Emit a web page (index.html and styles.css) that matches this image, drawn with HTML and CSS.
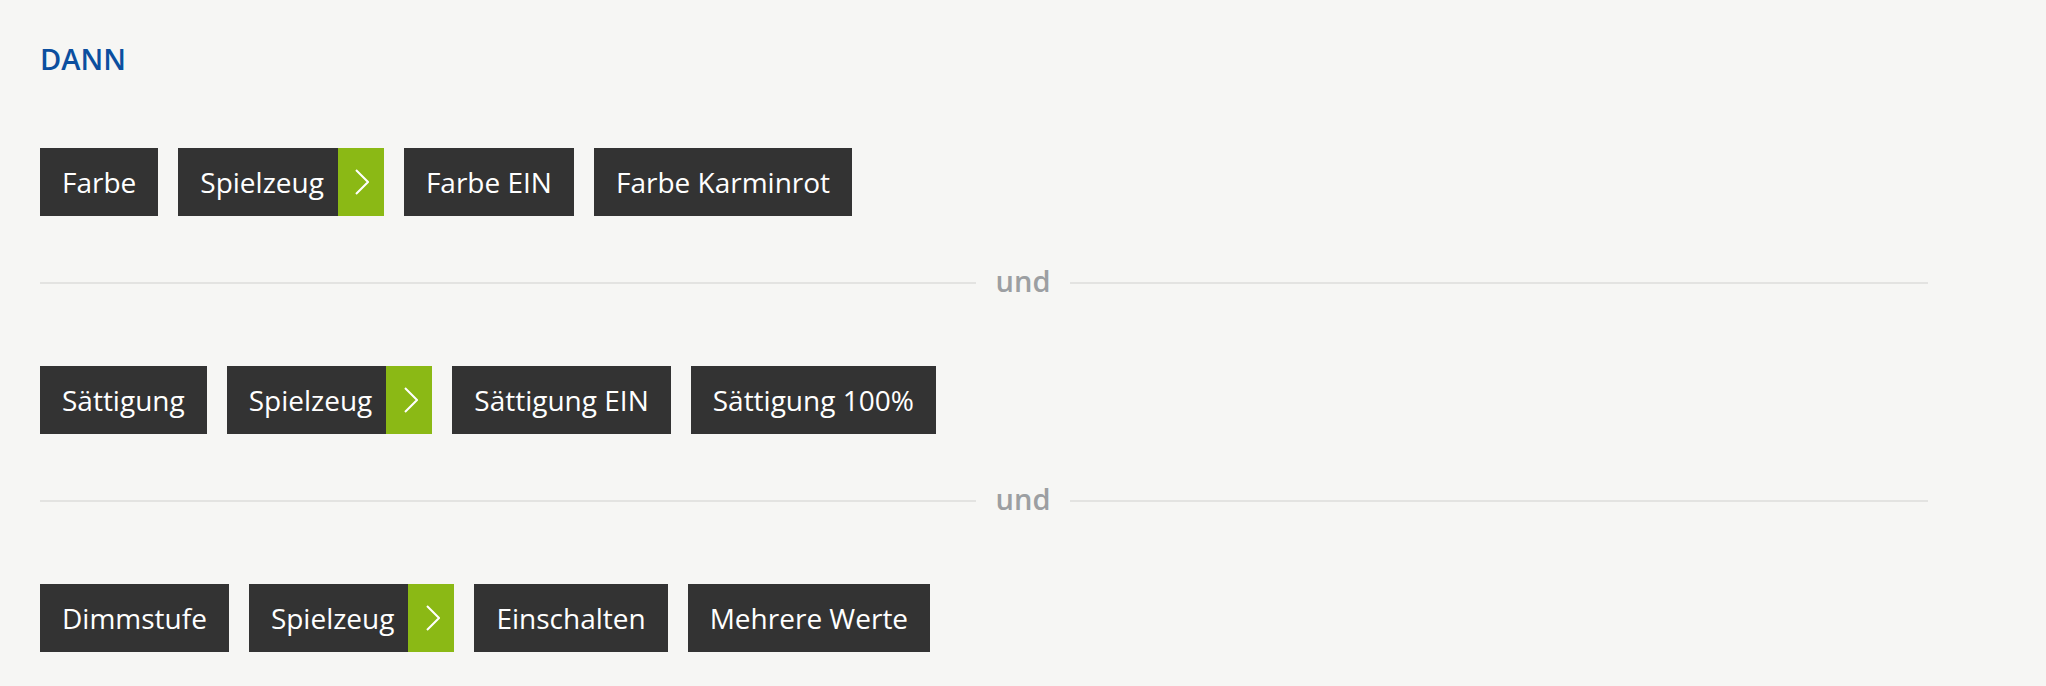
FILE: index.html
```html
<!DOCTYPE html>
<html lang="de">
<head>
<meta charset="utf-8">
<title>DANN</title>
<link rel="stylesheet" href="styles.css">
</head>
<body>
<main class="page">
  <h2 class="title">DANN</h2>

  <div class="row">
    <span class="chip">Farbe</span>
    <span class="chip chip-link"><span class="chip-label">Spielzeug</span><span class="chip-arrow"><svg width="14" height="26" viewBox="0 0 14 26"><polyline points="1,1 13,13 1,25" fill="none" stroke="#fff" stroke-width="2"/></svg></span></span>
    <span class="chip">Farbe EIN</span>
    <span class="chip">Farbe Karminrot</span>
  </div>

  <div class="divider"><span class="line"></span><span class="divider-text">und</span><span class="line line-right"></span></div>

  <div class="row">
    <span class="chip">Sättigung</span>
    <span class="chip chip-link"><span class="chip-label">Spielzeug</span><span class="chip-arrow"><svg width="14" height="26" viewBox="0 0 14 26"><polyline points="1,1 13,13 1,25" fill="none" stroke="#fff" stroke-width="2"/></svg></span></span>
    <span class="chip">Sättigung EIN</span>
    <span class="chip">Sättigung 100%</span>
  </div>

  <div class="divider"><span class="line"></span><span class="divider-text">und</span><span class="line line-right"></span></div>

  <div class="row">
    <span class="chip">Dimmstufe</span>
    <span class="chip chip-link"><span class="chip-label">Spielzeug</span><span class="chip-arrow"><svg width="14" height="26" viewBox="0 0 14 26"><polyline points="1,1 13,13 1,25" fill="none" stroke="#fff" stroke-width="2"/></svg></span></span>
    <span class="chip">Einschalten</span>
    <span class="chip">Mehrere Werte</span>
  </div>
</main>
</body>
</html>
```

FILE: styles.css
```css
* { box-sizing: border-box; }

html, body {
  margin: 0;
  padding: 0;
  background: #f6f6f4;
}

body {
  font-family: "Open Sans", "Liberation Sans", sans-serif;
}

.page {
  padding: 40px 40px 0 40px;
}

.title {
  margin: 0 0 70px 0;
  font-size: 29px;
  font-weight: 600;
  line-height: 38px;
  color: #0b4f9f;
}

.row {
  display: flex;
  gap: 20px;
}

.chip {
  display: flex;
  align-items: center;
  height: 68px;
  padding: 0 22px;
  background: #333333;
  color: #ffffff;
  font-size: 28px;
  line-height: 38px;
  white-space: nowrap;
}

.chip-link {
  padding: 0;
}

.chip-label {
  padding: 0 14px 0 22px;
}

.chip-arrow {
  display: flex;
  align-items: center;
  justify-content: center;
  width: 46px;
  height: 100%;
  background: #8bb915;
}

.chip-arrow svg {
  margin-left: 3px;
}

.divider {
  display: grid;
  grid-template-columns: 1fr auto 1fr;
  align-items: center;
  column-gap: 20px;
  margin: 46px 0 66px 0;
  height: 38px;
}

.line {
  display: block;
  height: 2px;
  margin-top: 4px;
  background: #e3e3e1;
}

.line-right {
  margin-right: 78px;
}

.divider-text {
  font-size: 29px;
  font-weight: 600;
  line-height: 38px;
  color: #9c9fa2;
}
```
